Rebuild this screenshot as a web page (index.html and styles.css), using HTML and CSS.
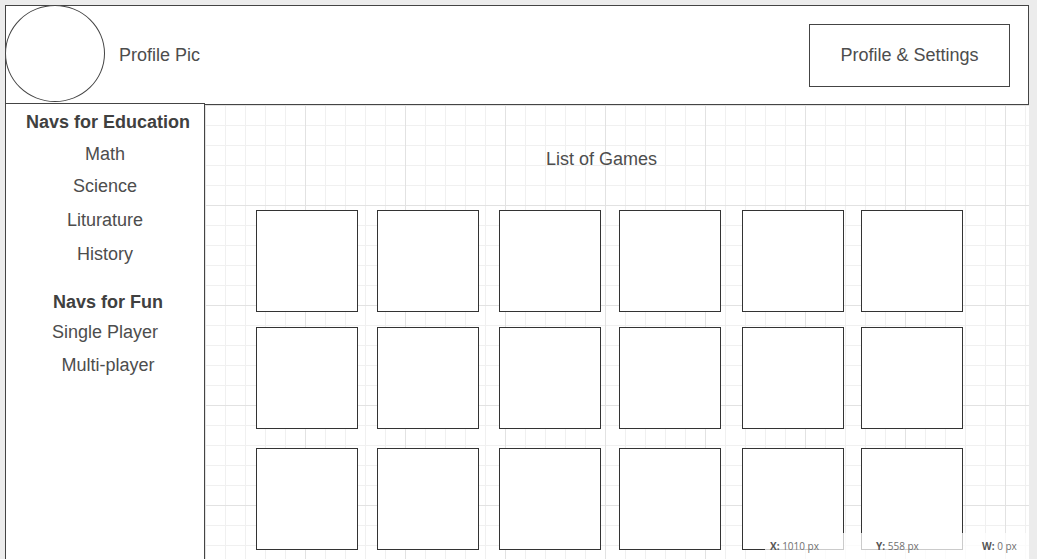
FILE: index.html
```html
<!DOCTYPE html>
<html lang="en">
<head>
    <meta charset="UTF-8">
    <meta name="viewport" content="width=device-width, initial-scale=1.0">
    <title>Games Wireframe</title>
    <link rel="stylesheet" href="styles.css">
</head>
<body>
    <div class="canvas">
        <header class="topbar">
            <div class="avatar"></div>
            <span class="avatar-label">Profile Pic</span>
            <div class="settings-box">Profile &amp; Settings</div>
        </header>

        <div class="layout">
            <nav class="sidebar">
                <div class="nav-group">
                    <h3 class="nav-title">Navs for Education</h3>
                    <a class="nav-link">Math</a>
                    <a class="nav-link">Science</a>
                    <a class="nav-link">Liturature</a>
                    <a class="nav-link">History</a>
                </div>
                <div class="nav-group fun">
                    <h3 class="nav-title">Navs for Fun</h3>
                    <a class="nav-link">Single Player</a>
                    <a class="nav-link">Multi-player</a>
                </div>
            </nav>

            <main class="games">
                <h2 class="games-title">List of Games</h2>
                <section class="game-grid">
                    <div class="game"></div>
                    <div class="game"></div>
                    <div class="game"></div>
                    <div class="game"></div>
                    <div class="game"></div>
                    <div class="game"></div>
                    <div class="game"></div>
                    <div class="game"></div>
                    <div class="game"></div>
                    <div class="game"></div>
                    <div class="game"></div>
                    <div class="game"></div>
                    <div class="game"></div>
                    <div class="game"></div>
                    <div class="game"></div>
                    <div class="game"></div>
                    <div class="game"></div>
                    <div class="game"></div>
                </section>
            </main>
        </div>

        <div class="status">
            <span><b>X:</b> 1010 px</span>
            <span><b>Y:</b> 558 px</span>
            <span><b>W:</b> 0 px</span>
        </div>
    </div>
</body>
</html>
```

FILE: styles.css
```css
/* wireframe canvas */
* {
    box-sizing: border-box;
}

html, body {
    height: 100%;
}

body {
    margin: 0;
    padding: 5px 8px 0 5px;
    background-color: #ececec;
    font-family: "Liberation Sans", Arial, sans-serif;
    color: #4d4d4d;
    overflow: hidden;
}

.canvas {
    position: relative;
    height: 100%;
    background-color: #fff;
    background-image:
        linear-gradient(to right, #e2e2e2 1px, transparent 1px),
        linear-gradient(to bottom, #e2e2e2 1px, transparent 1px),
        linear-gradient(to right, #f0f0f0 1px, transparent 1px),
        linear-gradient(to bottom, #f0f0f0 1px, transparent 1px);
    background-size: 100px 100px, 100px 100px, 20px 20px, 20px 20px;
    display: flex;
    flex-direction: column;
}

.topbar {
    height: 100px;
    border: 1px solid #444;
    background-color: #fff;
    display: flex;
    align-items: center;
}

.avatar {
    width: 100px;
    height: 97px;
    margin: -1px 0 0 -1px;
    align-self: flex-start;
    border: 1px solid #444;
    border-radius: 50%;
    background-color: #fff;
}

.avatar-label {
    margin-left: 14px;
    font-size: 18px;
}

.settings-box {
    margin-left: auto;
    margin-right: 18px;
    width: 201px;
    height: 63px;
    border: 1px solid #444;
    display: flex;
    align-items: center;
    justify-content: center;
    font-size: 18px;
}

.layout {
    flex: 1;
    display: flex;
    min-height: 0;
}

.sidebar {
    width: 200px;
    margin-top: -2px;
    padding-top: 7px;
    border: 1px solid #444;
    border-bottom: none;
    background-color: #fff;
}

.nav-group {
    display: flex;
    flex-direction: column;
    align-items: center;
    gap: 10px;
}

.nav-group.fun {
    margin-top: 26px;
    gap: 8px;
}

.nav-title {
    margin: 0 0 0 6px;
    font-size: 18px;
    line-height: 22px;
    font-weight: bold;
    color: #404040;
}

.nav-link {
    font-size: 18px;
    line-height: 22px;
}

.nav-group .nav-link:nth-of-type(3),
.nav-group .nav-link:nth-of-type(4) {
    margin-top: 2px;
}

.fun .nav-link:nth-of-type(2) {
    margin-top: 3px;
    margin-left: 6px;
}

.games {
    flex: 1;
    padding: 43px 0 0 51px;
}

.games-title {
    margin: 0 0 40px 290px;
    font-size: 18px;
    line-height: 22px;
    font-weight: normal;
}

.game-grid {
    display: grid;
    grid-template-columns: 121px 122px 120px 123px 119px 102px;
    grid-template-rows: 117px 121px 102px;
}

.game {
    width: 102px;
    height: 102px;
    border: 1px solid #333;
    background-color: #fff;
}

.status {
    position: absolute;
    left: 760px;
    right: 0;
    bottom: 0;
    height: 26px;
    padding-left: 5px;
    display: flex;
    align-items: center;
    background: rgba(255, 255, 255, 0.75);
    font-family: "Open Sans", "Liberation Sans", sans-serif;
    font-size: 10px;
    color: #707070;
    overflow: hidden;
}

.status span {
    flex: 0 0 106px;
    white-space: nowrap;
}

.status b {
    color: #555;
}
```
